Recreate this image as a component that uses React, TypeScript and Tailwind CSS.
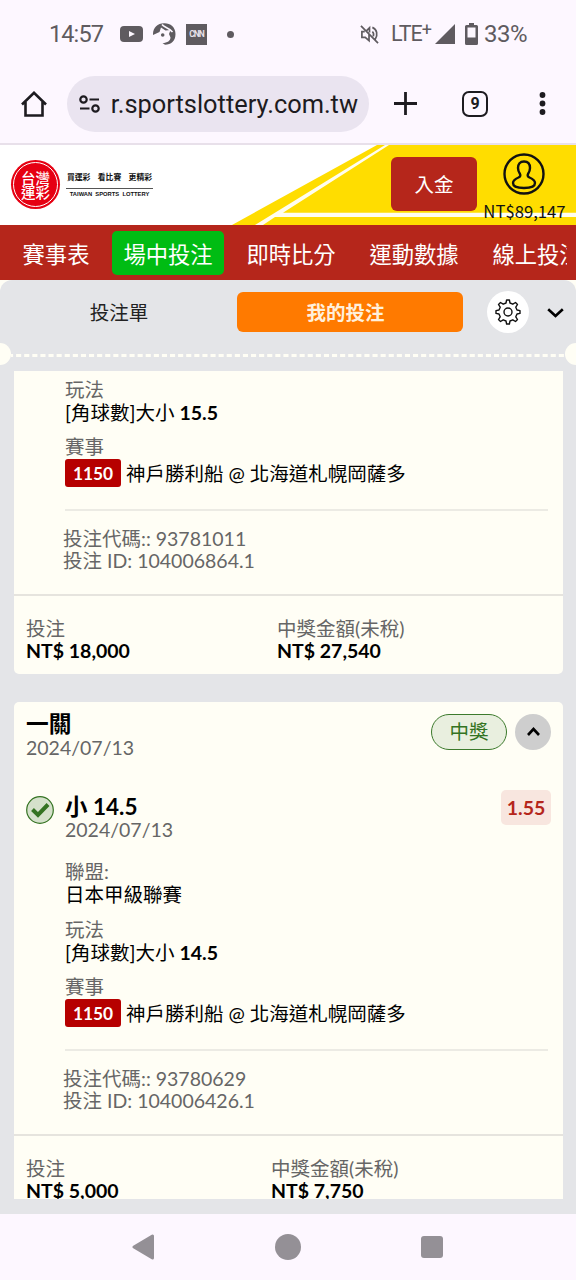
import React from "react";

interface Bet {
  code: string,
  id: string,
  stake: string,
  payout: string,
  line: string,
  payoutOffset: string
}

const cjk = "font-[Lato,'Noto_Sans_CJK_TC',sans-serif]";

const StatusBar = () => (
  <div className="h-[68px] flex items-center justify-between pl-[49px] pr-[49px] text-[#5f5b60] font-[Roboto,sans-serif]">
    <div className="flex items-center h-6">
      <span className="w-[71px] text-[23.5px] leading-6 tracking-[-0.9px]">14:57</span>
      <svg className="w-[23px] h-4" viewBox="0 0 23 16">
        <rect width="23" height="16" rx="4" fill="#5f5b60" />
        <path d="M9 5l6 3-6 3z" fill="#fdf7ff" />
      </svg>
      <svg className="w-[23px] h-[22px] ml-2.5" viewBox="0 0 23 22">
        <path d="M0 12C-.3 5 4 .5 11 .3 17 0 22.500 4 22.500 11S18 21.700 12 21.800L9.500 20c5 0 8-2.500 8-5.500l-1.500-3.500 1.500-4-5 .5L8 4.500 6.500 9z" fill="#5f5b60" />
        <path d="M9 1.500c2 3 7 3 10.500 7.500" fill="none" stroke="#fdf7ff" strokeWidth="1.500" />
        <circle cx="9.700" cy="12" r="1.800" fill="#5f5b60" />
      </svg>
      <span className="ml-[10px] w-[21px] h-[21px] bg-[#5f5b60] text-[#e8e2ea] text-[8.5px] font-bold tracking-[-1px] flex items-center justify-center">CNN</span>
      <span className="ml-5 w-[7px] h-[7px] rounded-full bg-[#5f5b60]" />
    </div>
    <div className="flex items-center h-6">
      <svg className="w-[19px] h-[19px]" viewBox="0 0 20 20" fill="none" stroke="#5f5b60" strokeWidth="1.800">
        <path d="M1 1l18 18M5 7H2v6h3.500l4 3.500V10M7 6l3-3v5M13 7c1.500 1 1.500 3 1 5M13 2.500c5 2 6 8 3 12.500" />
      </svg>
      <span className="ml-3 text-[21.5px] leading-6 tracking-[-1px]">LTE</span>
      <span className="text-[18px] leading-4 h-6">+</span>
      <svg className="w-5 h-5 ml-[3px]" viewBox="0 0 20 20">
        <path d="M20 0v20H0z" fill="#5f5b60" />
      </svg>
      <svg className="w-[13px] h-[22px] ml-2.5" viewBox="0 0 13 22">
        <path d="M4 0h5v2h2.500q1.500 0 1.500 1.500v17q0 1.500-1.500 1.500h-10Q0 22 0 20.500v-17Q0 2 1.500 2H4zM2.500 4.500v10h8v-10z" fill="#5f5b60" fillRule="evenodd" />
      </svg>
      <span className="ml-[6px] text-[24px] leading-6 tracking-[-0.5px]">33%</span>
    </div>
  </div>
)

const BrowserBar = () => (
  <div className="h-[77px] flex items-start border-b-2 border-[#e8e0ea] pl-[21px] pt-2 text-[#1d1b20] font-[Roboto,sans-serif]">
    <svg className="w-[26px] h-[26px] mt-[15px]" viewBox="0 0 26 26" fill="none" stroke="#1d1b20" strokeWidth="2.600">
      <path d="M1 13.500L13 1.800l12 11.700M4.500 11v13.500h17V11" />
    </svg>
    <div className="ml-5 w-[302px] h-14 rounded-full bg-[#eae4f0] flex items-center pl-3">
      <svg className="w-[21px] h-[18px]" viewBox="0 0 21 18" fill="none" stroke="#1d1b20" strokeWidth="2.200">
        <circle cx="4.500" cy="4.500" r="3.200" />
        <circle cx="16.500" cy="13.500" r="3.200" />
        <path d="M10.500 4.500H20M1 13.500h9.500" />
      </svg>
      <div className="ml-3 w-[246px] overflow-hidden flex justify-end">
        <span className="text-[25.4px] leading-8 whitespace-nowrap">r.sportslottery.com.tw</span>
      </div>
    </div>
    <svg className="w-[23px] h-[23px] ml-[25px] mt-4" viewBox="0 0 23 23" stroke="#1d1b20" strokeWidth="2.800">
      <path d="M11.500 0v23M0 11.500h23" />
    </svg>
    <div className="ml-[45px] mt-[15px] w-[26px] h-[26px] rounded-[7px] border-[2.5px] border-[#1d1b20] flex items-center justify-center text-base font-bold">9</div>
    <svg className="w-[7px] h-[23px] ml-[51px] mt-4" viewBox="0 0 7 23" fill="#1d1b20">
      <circle cx="3.500" cy="3" r="2.900" />
      <circle cx="3.500" cy="11.500" r="2.900" />
      <circle cx="3.500" cy="20" r="2.900" />
    </svg>
  </div>
)

const Header = () => (
  <div className="relative h-20 bg-white">
    <svg className="absolute inset-0 w-full h-full" viewBox="0 0 576 80">
      <path d="M377 0h199v80H232z" fill="#ffdd00" />
      <path d="M385 0h4L283 67.700h293v4.300H275l-12 8h-8z" fill="#fffdf0" />
    </svg>
    <div className="relative flex h-full">
      <div className="ml-[11px] mt-[15px] w-[49px] h-[49px] rounded-full bg-[#e60012] p-[2px]">
        <div className="w-full h-full rounded-full border border-white text-white text-[14.5px] leading-[14px] font-medium flex flex-col items-center justify-center font-['Noto_Sans_CJK_TC',sans-serif]">
          <span>台灣</span>
          <span>運彩</span>
        </div>
      </div>
      <div className="ml-[6px] mt-[27px] w-[87px] h-6 text-[#111] font-['Liberation_Sans','Noto_Sans_CJK_TC',sans-serif]">
        <div className="flex justify-between h-[17px] px-px text-[7.8px] leading-[12px] font-bold border-b border-[#555] whitespace-nowrap">
          <span>買運彩</span>
          <span>看比賽</span>
          <span>更精彩</span>
        </div>
        <div className="text-center text-[5.8px] leading-[10px] font-bold whitespace-nowrap">TAIWAN&nbsp; SPORTS&nbsp; LOTTERY</div>
      </div>
      <button className="ml-[238px] mt-3 w-[86px] h-[54px] rounded-md bg-[#b5261b] text-white text-[19.5px] font-['Noto_Sans_CJK_TC',sans-serif]">入金</button>
      <div className="ml-1 mt-2 w-[86px] flex flex-col items-center">
        <svg className="w-[42px] h-[42px]" viewBox="0 0 42 42" fill="none" stroke="#111" strokeWidth="2.400">
          <circle cx="21" cy="21" r="19.500" />
          <path d="M21 8.500c-4 0-6 2.500-6 6.500 0 3 1 4.500 2 6 .8 1.500.2 2.700-1.500 3.500-3 1.300-5.500 2.500-5.500 5.500 0 3.500 5.500 5 11 5s11-1.500 11-5c0-3-2.500-4.200-5.500-5.500-1.700-.8-2.300-2-1.500-3.500 1-1.500 2-3 2-6 0-4-2-6.500-6-6.500z" />
        </svg>
        <span className="mt-1 ml-px text-[16.7px] leading-6 text-[#111] font-['Noto_Sans_CJK_TC',sans-serif]">NT$89,147</span>
      </div>
    </div>
  </div>
)

const Menu = () => {
  const items = ["賽事表", "場中投注", "即時比分", "運動數據", "線上投注"];

  return (
    <nav className="h-[55px] bg-[#b5261b] pl-[11px] pr-[9px]">
      <div className="h-full flex items-center gap-[11px] overflow-hidden text-white text-[22.3px] leading-8 font-['Noto_Sans_CJK_TC',sans-serif]">
        {items.map((item, i) => (
          <a key={item} className={`shrink-0 h-11 flex items-center justify-center whitespace-nowrap rounded-[5px] ${i === 0 ? 'w-[90px]' : 'w-[112px]'} ${i === 1 ? 'bg-[#00bc13]' : ''}`}>{item}</a>
        ))}
      </div>
    </nav>
  )
}

const Tabs = () => (
  <div className="bg-[#fffef5]">
    <div className="h-[91px] bg-[#e4e5e8] rounded-t-xl">
      <div className="h-16 flex items-center font-['Noto_Sans_CJK_TC',sans-serif]">
        <span className="w-[238px] text-center text-[19.5px] text-[#222]">投注單</span>
        <span className="-ml-px w-[226px] h-10 pr-[9px] rounded-md bg-[#ff7a00] text-[#fff0dc] text-[19.5px] font-bold flex items-center justify-center">我的投注</span>
        <span className="ml-6 w-[42px] h-[42px] rounded-full bg-white flex items-center justify-center">
          <svg className="w-[26px] h-[26px]" viewBox="0 0 26 26" fill="none" stroke="#111" strokeWidth="1.400">
            <path strokeLinejoin="round" d="M11 4l.6-3h2.800l.6 3 2.800 1.200L20.500 3.500l2 2-1.700 2.700L22 11l3 .6v2.800l-3 .6-1.200 2.800 1.700 2.700-2 2-2.700-1.700L15 22l-.6 3h-2.800L11 22l-2.800-1.200-2.700 1.700-2-2 1.700-2.700L4 15l-3-.6v-2.800L4 11l1.200-2.800L3.500 5.500l2-2 2.700 1.700z" />
            <circle cx="13" cy="13" r="4" />
          </svg>
        </span>
        <svg className="ml-[18px] mt-0.5 w-[17px] h-[10px]" viewBox="0 0 17 10" fill="none" stroke="#000" strokeWidth="2.600">
          <path d="M1.200 1.200L8.500 8l7.300-6.800" />
        </svg>
      </div>
      <div className="h-[22px] -mt-px flex items-center overflow-hidden">
        <span className="shrink-0 w-[22px] h-[22px] -ml-[11px] rounded-full bg-[#fffef5]" />
        <svg className="flex-1 h-[3px] mt-[3px]">
          <path d="M0 1.500H560" stroke="#fffef5" strokeWidth="3" strokeDasharray="5.100 3" strokeDashoffset="3" />
        </svg>
        <span className="shrink-0 w-[22px] h-[22px] -mr-[11px] rounded-full bg-[#fffef5]" />
      </div>
    </div>
  </div>
)

const BetBody = ({ bet }: { bet: Bet }) => (
  <>
    <div className="pl-[51px] pr-[15px] text-[19.5px] leading-[23px] whitespace-nowrap">
      <div className="h-[23px] text-[#666]">玩法</div>
      <div className="h-[23px]">[角球數]大小 <b>{bet.line}</b></div>
      <div className="h-[23px] mt-[11px] text-[#666]">賽事</div>
      <div className="h-7 mt-px flex items-center">
        <span className="w-14 h-7 rounded-[3px] bg-[#b60000] text-white text-[17.3px] font-bold flex items-center justify-center">1150</span>
        <span className="ml-[5px]">神戶勝利船 @ 北海道札幌岡薩多</span>
      </div>
      <div className="mt-[22px] h-[2px] bg-[#ecebe4]" />
    </div>
    <div className="pl-[49px] pt-[17px] h-[85px] text-[19.5px] leading-[21.5px] text-[#666] border-b-2 border-[#e6e4de]">
      <div className="h-[21.5px]">投注代碼:: {bet.code}</div>
      <div className="h-[21.5px]">投注 ID: {bet.id}</div>
    </div>
    <div className="pl-3 pt-[22px] h-[78px] flex text-[19.5px] leading-[21.5px]">
      <div className={bet.payoutOffset}>
        <div className="h-[21.5px] text-[#666]">投注</div>
        <div className="h-[21.5px] font-bold">{bet.stake}</div>
      </div>
      <div>
        <div className="h-[21.5px] text-[#666]">中獎金額(未稅)</div>
        <div className="h-[21.5px] font-bold">{bet.payout}</div>
      </div>
    </div>
  </>
)

const first: Bet = { code: "93781011", id: "104006864.1", stake: "NT$ 18,000", payout: "NT$ 27,540", line: "15.5", payoutOffset: "w-[251px]" };
const second: Bet = { code: "93780629", id: "104006426.1", stake: "NT$ 5,000", payout: "NT$ 7,750", line: "14.5", payoutOffset: "w-[245px]" };

const App = () => {
  return (
    <div className="w-[576px] h-[1280px] overflow-hidden bg-[#fdf7ff] flex flex-col">
      <StatusBar />
      <BrowserBar />
      <Header />
      <Menu />
      <Tabs />
      <main className={`h-[843px] bg-[#e4e5e8] pl-[14px] pr-[13px] text-black ${cjk}`}>
        <div className="h-[828px] overflow-hidden">
          <section className="h-[303px] bg-[#fffef5] rounded-b-[5px] pt-[7px]">
            <BetBody bet={first} />
          </section>
          <section className="mt-7 bg-[#fffef5] rounded-t-[5px]">
            <div className="flex h-[93px] pl-3 pr-3 pt-3">
              <div className="flex-1 -mt-0.5">
                <div className="h-6 text-[22.7px] leading-6 font-bold">一關</div>
                <div className="h-[23px] text-[19.5px] leading-[23px] text-[#666]">2024/07/13</div>
              </div>
              <span className="w-[76px] h-9 rounded-full border border-[#3c7a2c] bg-[#e9efdf] text-[#347322] text-[19.5px] flex items-center justify-center">中獎</span>
              <span className="ml-2 w-9 h-9 rounded-full bg-[#cecece] flex items-center justify-center">
                <svg className="w-[13px] h-[9px] -mt-0.5" viewBox="0 0 13 9" fill="none" stroke="#000" strokeWidth="2.600">
                  <path d="M1 8l5.500-6L12 8" />
                </svg>
              </span>
            </div>
            <div className="flex h-[66px] pl-3 pr-3">
              <svg className="mt-px w-7 h-7" viewBox="0 0 28 28">
                <circle cx="14" cy="14" r="13.300" fill="#d5e1cb" stroke="#347322" strokeWidth="1.200" />
                <path d="M6.500 13.500l5.500 5.500L22 8.500" fill="none" stroke="#347322" strokeWidth="4" />
              </svg>
              <div className="flex-1 ml-[11px]">
                <div className="h-[23px] text-[22.5px] leading-6 font-bold">小 14.5</div>
                <div className="h-[23px] text-[19.5px] leading-[23px] text-[#666]">2024/07/13</div>
              </div>
              <span className="-mt-[5px] w-[50px] h-[35px] rounded-[5px] bg-[#f8e6df] text-[#b5261b] text-[19.5px] font-bold flex items-center justify-center">1.55</span>
            </div>
            <div className="pl-[51px] h-[57px] text-[19.5px] leading-[23px] -mt-px mb-px">
              <div className="h-[23px] text-[#666]">聯盟:</div>
              <div className="h-[23px]">日本甲級聯賽</div>
            </div>
            <BetBody bet={second} />
          </section>
        </div>
      </main>
      <footer className="h-[66px] flex items-center">
        <svg className="ml-[132px] w-[23px] h-[26px]" viewBox="0 0 23 26">
          <path d="M2 13L20.500 2v22z" fill="#949096" stroke="#949096" strokeWidth="3" strokeLinejoin="round" />
        </svg>
        <span className="ml-[120px] w-[26px] h-[26px] rounded-full bg-[#949096]" />
        <span className="ml-[120px] w-[22px] h-[22px] rounded-[3px] bg-[#949096]" />
      </footer>
    </div>
  )
}

export default App;
